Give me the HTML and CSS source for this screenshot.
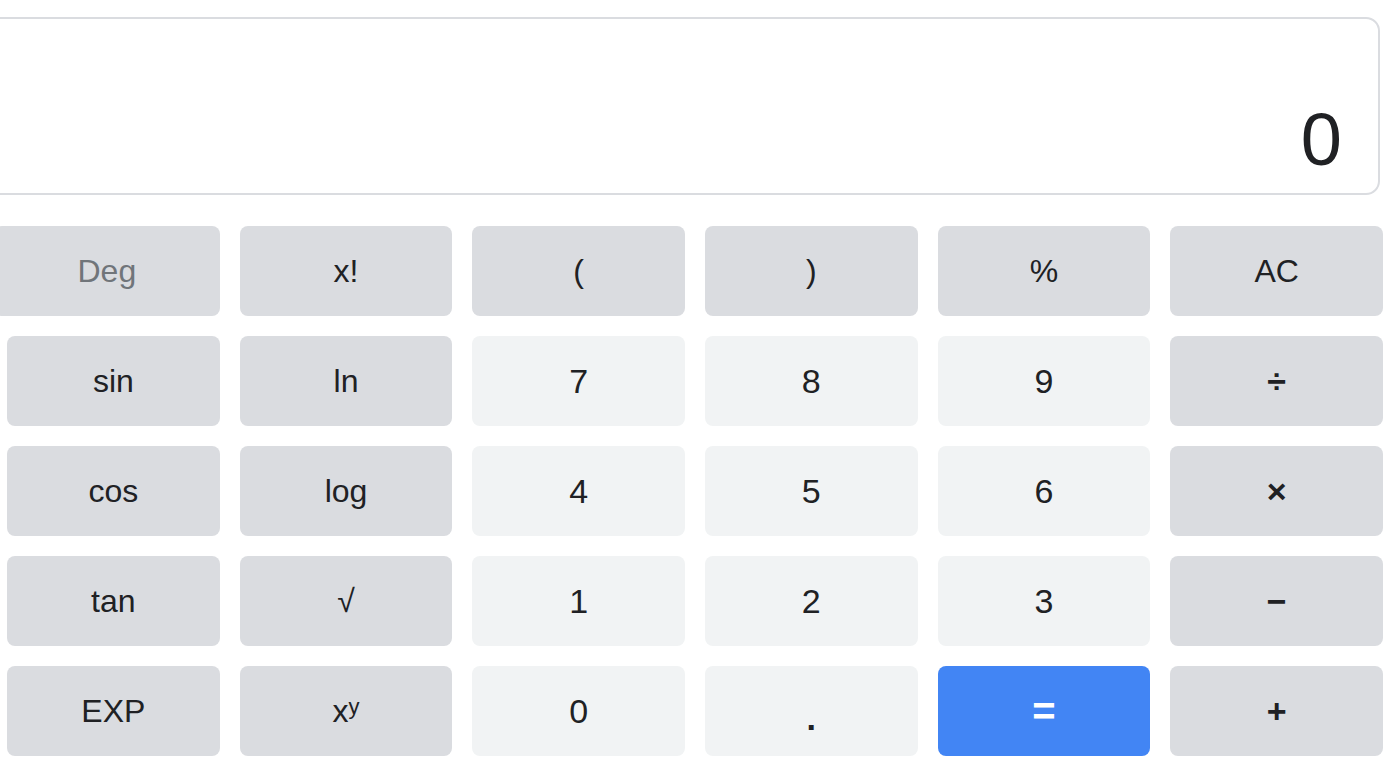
FILE: index.html
```html
<!DOCTYPE html>
<html lang="en">
<head>
<meta charset="utf-8">
<title>Calculator</title>
<link rel="stylesheet" href="styles.css">
</head>
<body>
<div class="calc">
  <div class="display"><span class="value">0</span></div>
  <div class="keys">
    <button class="key fn deg">Deg</button>
    <button class="key fn">x!</button>
    <button class="key fn">(</button>
    <button class="key fn">)</button>
    <button class="key fn">%</button>
    <button class="key fn">AC</button>

    <button class="key fn">sin</button>
    <button class="key fn">ln</button>
    <button class="key num">7</button>
    <button class="key num">8</button>
    <button class="key num">9</button>
    <button class="key fn op">÷</button>

    <button class="key fn">cos</button>
    <button class="key fn">log</button>
    <button class="key num">4</button>
    <button class="key num">5</button>
    <button class="key num">6</button>
    <button class="key fn op">×</button>

    <button class="key fn">tan</button>
    <button class="key fn">√</button>
    <button class="key num">1</button>
    <button class="key num">2</button>
    <button class="key num">3</button>
    <button class="key fn op">−</button>

    <button class="key fn">EXP</button>
    <button class="key fn">x<sup>y</sup></button>
    <button class="key num">0</button>
    <button class="key num dot">.</button>
    <button class="key eq">=</button>
    <button class="key fn op">+</button>
  </div>
</div>
</body>
</html>
```
FILE: styles.css
```css
html, body {
  margin: 0;
  padding: 0;
  background: #ffffff;
  overflow: hidden;
}
body {
  font-family: "Liberation Sans", Arial, sans-serif;
  color: #202124;
}
.calc {
  padding: 17px 9px 0 7px;
}
.display {
  height: 178px;
  box-sizing: border-box;
  margin-left: -40px;
  margin-right: 3px;
  border: 2px solid #dadce0;
  border-radius: 14px;
  display: flex;
  align-items: flex-end;
  justify-content: flex-end;
  padding: 0 36px 16px 0;
}
.value {
  font-size: 74px;
  line-height: 1;
  color: #202124;
}
.keys {
  margin-top: 31px;
  display: grid;
  grid-template-columns: repeat(6, 1fr);
  grid-auto-rows: 90px;
  gap: 20px;
}
.key {
  border: none;
  border-radius: 8px;
  font-family: "Liberation Sans", Arial, sans-serif;
  font-size: 32px;
  color: #202124;
  padding: 0;
  display: flex;
  align-items: center;
  justify-content: center;
}
.fn { background: #dadce0; }
.num { background: #f1f3f4; font-size: 34px; }
.deg { color: #70757a; margin-left: -13px; }
.op { font-size: 34px; font-weight: bold; }
.dot { font-weight: bold; padding-top: 14px; }
.eq {
  background: #4285f4;
  color: #ffffff;
  font-size: 40px;
  font-weight: bold;
}
.key sup {
  font-size: 22px;
  position: relative;
  top: -4px;
}
```
